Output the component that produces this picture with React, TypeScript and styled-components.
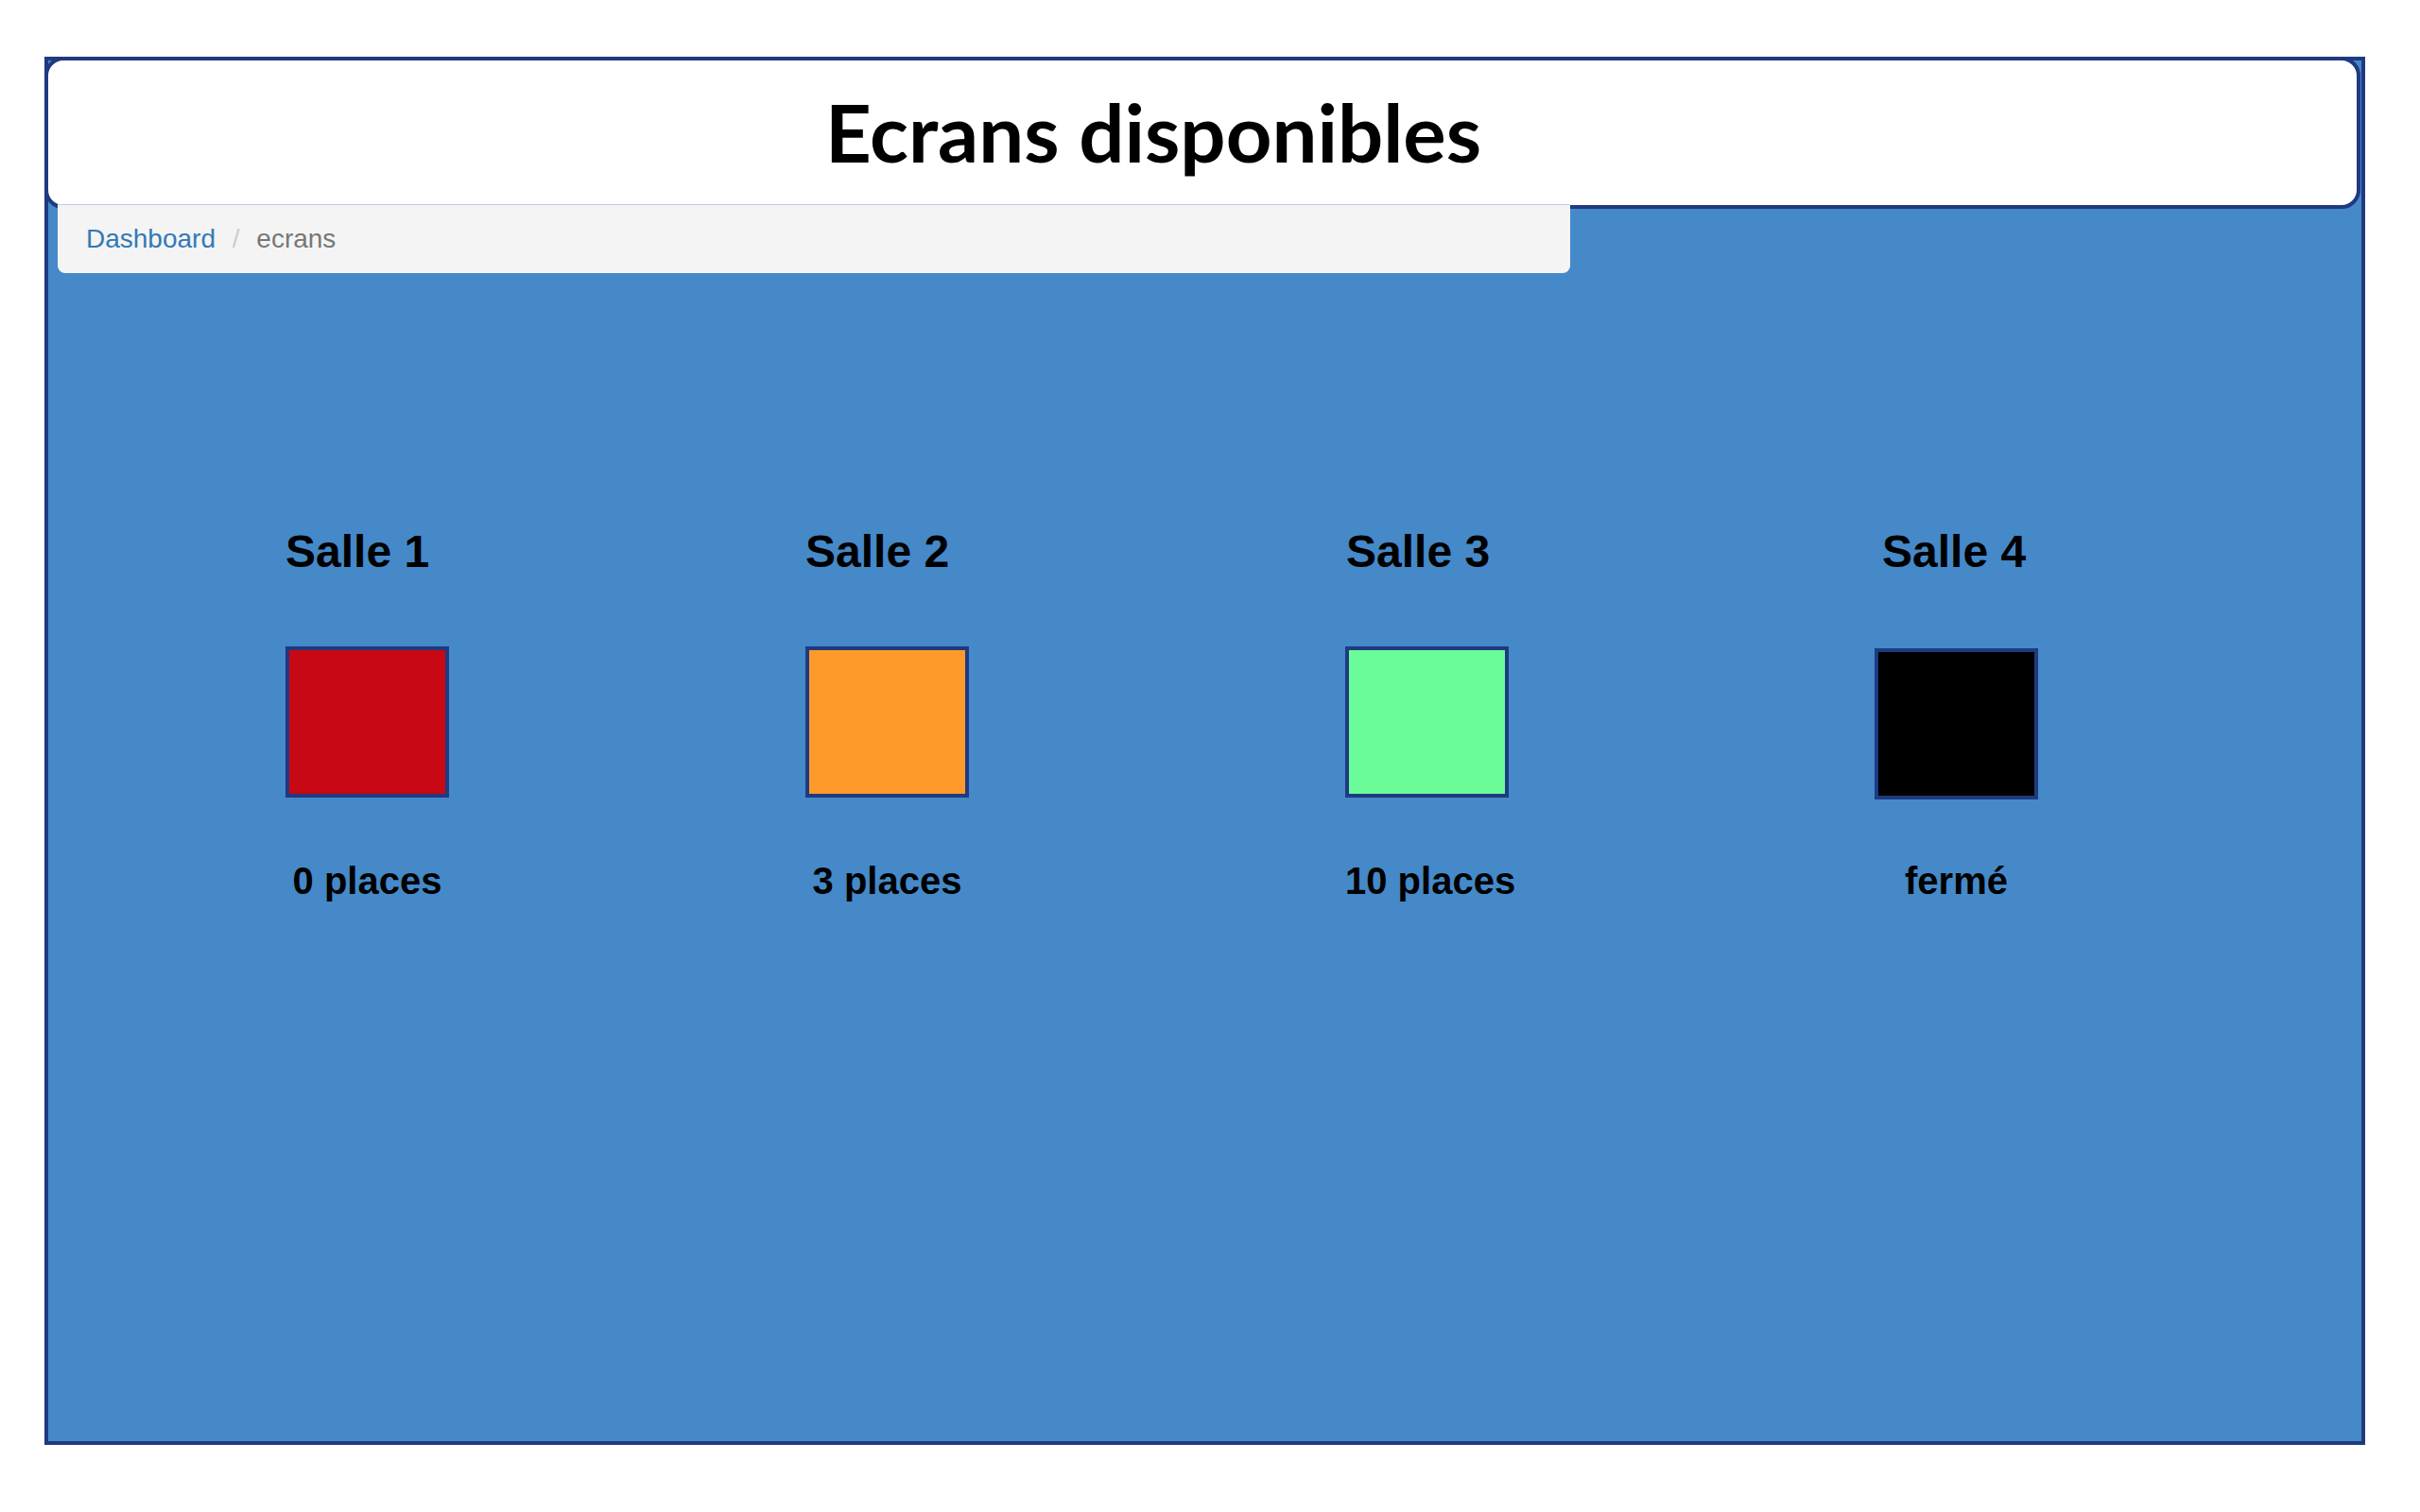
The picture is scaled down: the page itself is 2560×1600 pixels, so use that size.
import { FC } from 'react';
import styled, { createGlobalStyle } from 'styled-components';

const GlobalStyle = createGlobalStyle`
  html, body {
    margin: 0;
    padding: 0;
    background: #ffffff;
  }
  body {
    font-family: 'Liberation Sans', Arial, Helvetica, sans-serif;
  }
`;

const Page = styled.div`
  width: 2560px;
  height: 1600px;
  padding-top: 60px;
  box-sizing: border-box;
`;

const Frame = styled.div`
  margin-left: 47px;
  width: 2455px;
  height: 1469px;
  box-sizing: border-box;
  border: 4px solid #1f3a80;
  background: #4589c9;
`;

const Header = styled.header`
  margin: -4px 1px 0 -4px;
  border: 4px solid #1f3a80;
  border-radius: 20px;
  background: #ffffff;
  padding: 32px 104px 35px 0;
  text-align: center;
`;

const Title = styled.h1`
  margin: 0;
  font-family: Lato, 'Open Sans', sans-serif;
  font-weight: 700;
  font-size: 85px;
  line-height: 86px;
  color: #000000;
`;

const Breadcrumb = styled.ol`
  position: relative;
  margin: -4px 0 0 10px;
  width: 1600px;
  box-sizing: border-box;
  padding: 16px 30px;
  list-style: none;
  background: #f4f4f4;
  border-radius: 0 0 8px 8px;
  box-shadow: 0 -1px 0 #c3cbdf;
  font-size: 28px;
  line-height: 40px;
`;

const Crumb = styled.li<{ $active?: boolean }>`
  display: inline-block;
  color: ${(p) => (p.$active ? '#777777' : '#337ab7')};

  &:not(:first-child)::before {
    content: '/\\00a0';
    padding: 0 10px;
    color: #cccccc;
  }
`;

const Rooms = styled.div`
  display: flex;
  margin-top: 269px;
  padding-left: 251px;
`;

const Room = styled.div<{ $width: number }>`
  width: ${(p) => p.$width}px;
  flex: none;
`;

const RoomName = styled.h3<{ $shift: number }>`
  margin: 0 0 0 ${(p) => p.$shift}px;
  font-size: 48px;
  line-height: 52.8px;
  font-weight: 700;
  color: #000000;
`;

const Screen = styled.div<{ $color: string; $drop: number }>`
  width: 173px;
  height: 160px;
  box-sizing: border-box;
  margin-top: ${(p) => 73 + p.$drop}px;
  border: 4px solid #1f3a80;
  background: ${(p) => p.$color};
`;

const Seats = styled.p<{ $drop: number }>`
  width: 173px;
  margin: ${(p) => 64 - p.$drop}px 0 0;
  text-align: center;
  white-space: nowrap;
  font-size: 40px;
  line-height: 48px;
  font-weight: 700;
  color: #000000;
`;

const rooms = [
  { name: 'Salle 1', color: '#c80815', seats: '0 places', width: 550, shift: 0, drop: 0 },
  { name: 'Salle 2', color: '#fd9a29', seats: '3 places', width: 571, shift: 0, drop: 0 },
  { name: 'Salle 3', color: '#6bfc9a', seats: '10 places', width: 560, shift: 1, drop: 0 },
  { name: 'Salle 4', color: '#000000', seats: 'fermé', width: 400, shift: 8, drop: 2 },
];

const App: FC = () => {
  return (
    <>
      <GlobalStyle />
      <Page>
        <Frame>
          <Header>
            <Title>Ecrans disponibles</Title>
          </Header>
          <Breadcrumb>
            <Crumb>Dashboard</Crumb>{' '}
            <Crumb $active>ecrans</Crumb>
          </Breadcrumb>
          <Rooms>
            {rooms.map((room) => (
              <Room key={room.name} $width={room.width}>
                <RoomName $shift={room.shift}>{room.name}</RoomName>
                <Screen $color={room.color} $drop={room.drop} />
                <Seats $drop={room.drop}>{room.seats}</Seats>
              </Room>
            ))}
          </Rooms>
        </Frame>
      </Page>
    </>
  );
};

export default App;
